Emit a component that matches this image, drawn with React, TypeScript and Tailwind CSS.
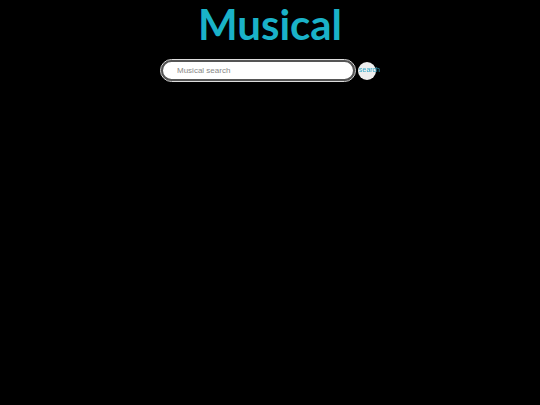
import React from 'react';

export default function App() {
  return (
    <div className="min-h-[405px] w-full bg-black">
      <div className="flex flex-col items-center pt-[1px]">
        <h1 className="text-[42px] font-bold leading-[46px] text-[#1ab2c8] [font-family:Lato,sans-serif]">
          Musical
        </h1>
        <div className="mt-[13px] ml-[-3px] flex items-center gap-[3px]">
          <div className="flex h-[21px] w-[194px] items-center rounded-full border-2 border-[#555] bg-white outline outline-1 outline-[#ddd] pl-[14px]">
            <input
              autoFocus
              className="w-full bg-transparent text-[8px] text-gray-700 placeholder:text-[#888] outline-none [font-family:'Liberation_Sans',Arial,sans-serif]"
              placeholder="Musical search"
            />
          </div>
          <button className="flex h-[18px] w-[18px] items-center justify-start overflow-visible whitespace-nowrap rounded-full bg-[#eeeeee] text-[7px] text-[#2fa8c8] [font-family:'Liberation_Sans',Arial,sans-serif]">
            <span className="ml-[1px]">search</span>
          </button>
        </div>
      </div>
    </div>
  );
}
